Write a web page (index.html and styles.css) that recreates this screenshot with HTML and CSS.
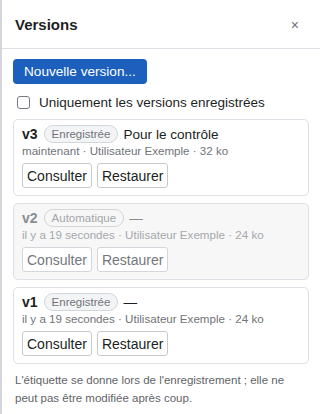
FILE: index.html
```html
<!DOCTYPE html>
<html lang="fr">
<head>
<meta charset="utf-8">
<link rel="stylesheet" href="styles.css">
</head>
<body>
<aside class="panel">
  <header class="panel-head">
    <h2 class="title">Versions</h2>
    <button class="close" aria-label="Fermer">×</button>
  </header>
  <div class="panel-body">
    <button class="primary">Nouvelle version...</button>
    <label class="filter"><input type="checkbox" class="cb"><span>Uniquement les versions enregistrées</span></label>
    <ul class="list">
      <li class="card">
        <div class="row"><span class="ver">v3</span><span class="badge">Enregistrée</span><span class="label">Pour le contrôle</span></div>
        <div class="meta">maintenant · Utilisateur Exemple · 32 ko</div>
        <div class="actions"><button class="btn">Consulter</button><button class="btn">Restaurer</button></div>
      </li>
      <li class="card auto">
        <div class="row"><span class="ver">v2</span><span class="badge">Automatique</span><span class="label">—</span></div>
        <div class="meta">il y a 19 secondes · Utilisateur Exemple · 24 ko</div>
        <div class="actions"><button class="btn">Consulter</button><button class="btn">Restaurer</button></div>
      </li>
      <li class="card">
        <div class="row"><span class="ver">v1</span><span class="badge">Enregistrée</span><span class="label">—</span></div>
        <div class="meta">il y a 19 secondes · Utilisateur Exemple · 24 ko</div>
        <div class="actions"><button class="btn">Consulter</button><button class="btn">Restaurer</button></div>
      </li>
    </ul>
    <p class="note">L'étiquette se donne lors de l'enregistrement ; elle ne peut pas être modifiée après coup.</p>
  </div>
</aside>
</body>
</html>
```
FILE: styles.css
```css
* { box-sizing: border-box; }
html, body { margin: 0; padding: 0; background: #fff; }
body { font-family: "Liberation Sans", Arial, sans-serif; color: #1d1f23; }
.panel {
  width: 320px;
  height: 414px;
  border-left: 2px solid #d3d6da;
  background: #fff;
}
.panel-head {
  height: 49px;
  border-bottom: 1px solid #dcdfe3;
  display: flex;
  align-items: center;
  justify-content: space-between;
  padding: 1px 21px 0 13px;
}
.title { margin: 0; font-size: 15px; font-weight: 700; color: #1d1f23; }
.close {
  border: 0; background: none; padding: 0;
  font-family: "Liberation Sans", Arial, sans-serif;
  font-size: 14px; color: #6b6f76; line-height: 1;
}
.panel-body { padding: 10px 11px 0 11px; }
.primary {
  display: block;
  height: 25px;
  padding: 0 11px;
  border: 0;
  border-radius: 4px;
  background: #1c5fbd;
  color: #fff;
  font-family: "Liberation Sans", Arial, sans-serif;
  font-size: 13.6px;
}
.filter {
  display: flex; align-items: center; gap: 9px;
  height: 17px;
  margin: 10px 0 0 4px;
  font-size: 13.5px; color: #1d1f23;
}
.cb {
  appearance: none; -webkit-appearance: none;
  width: 13px; height: 13px; margin: 0;
  border: 1px solid #767a80; border-radius: 3px; background: #fff;
}
.list { list-style: none; margin: 8px 0 0 0; padding: 0; display: flex; flex-direction: column; gap: 7px; }
.card {
  border: 1px solid #dde0e4;
  border-radius: 5px;
  padding: 5px 8px 7px 8px;
  background: #fff;
}
.card.auto { background: #f7f7f8; color: #8a8d92; }
.row { display: flex; align-items: center; gap: 5px; height: 18px; }
.ver { font-weight: 700; font-size: 14px; margin-right: 1px; }
.badge {
  font-size: 11.5px; color: #70747a;
  border: 1px solid #d3d6da; background: #f3f4f6;
  border-radius: 9px; padding: 1px 7px; line-height: 14px;
}
.auto .badge { color: #a3a6aa; background: #f7f7f8; }
.label { font-size: 13.6px; }
.meta { font-size: 11.6px; color: #707479; line-height: 16px; }
.auto .meta { color: #a5a8ac; }
.actions { display: flex; gap: 5px; margin-top: 4px; }
.btn {
  height: 25px; padding: 0 4px;
  border: 1px solid #c7cbd0; border-radius: 3px; background: #fff;
  font-family: "Liberation Sans", Arial, sans-serif; font-size: 14px; color: #1d1f23;
}
.auto .btn { color: #74777c; border-color: #d3d6da; }
.note { margin: 7px 0 0 2px; font-size: 11.5px; line-height: 18px; color: #5f6368; }
```
